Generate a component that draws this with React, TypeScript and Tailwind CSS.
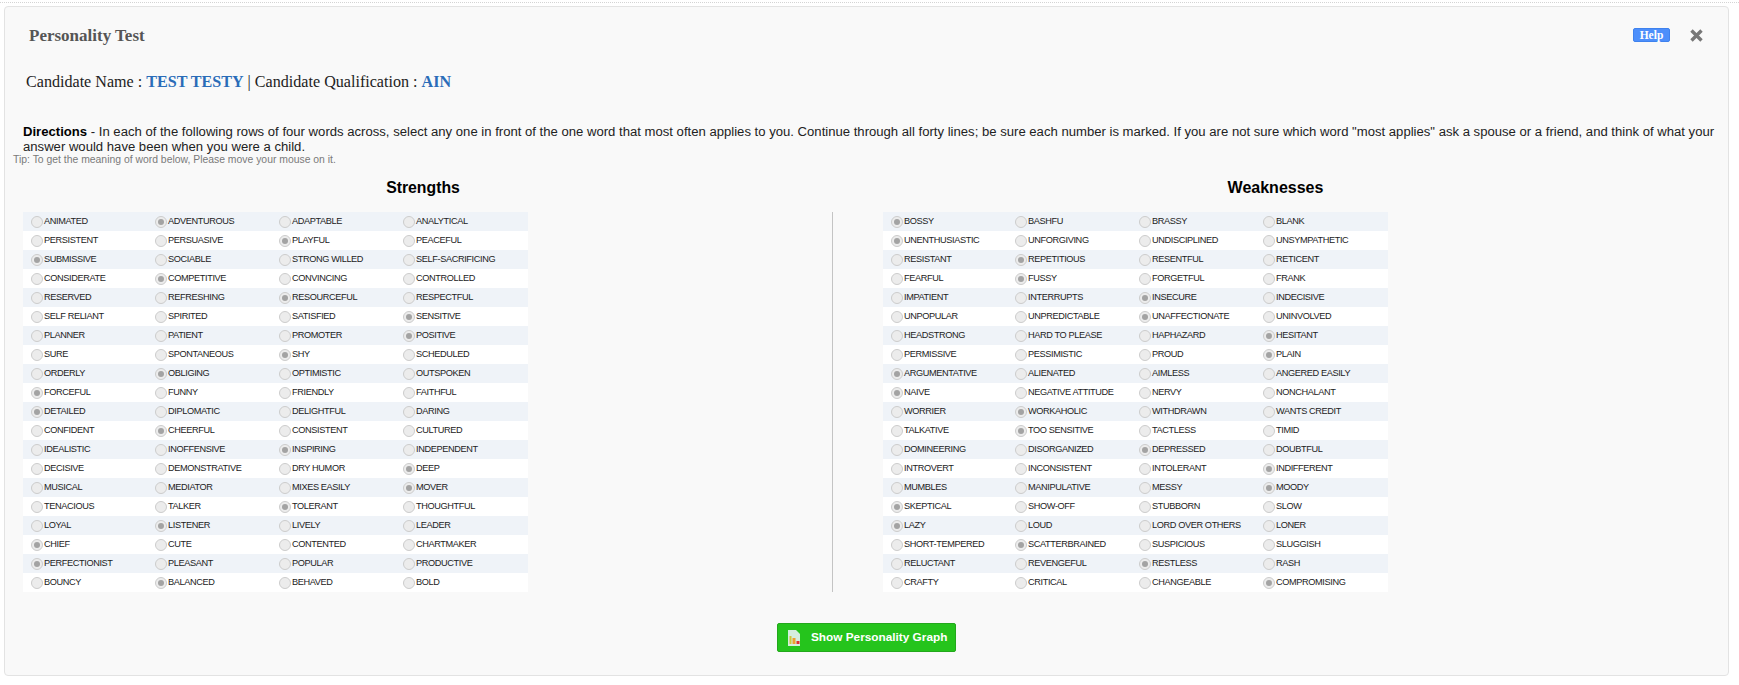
const strengths: [string[], number][] = [
  [["ANIMATED","ADVENTUROUS","ADAPTABLE","ANALYTICAL"],1],
  [["PERSISTENT","PERSUASIVE","PLAYFUL","PEACEFUL"],2],
  [["SUBMISSIVE","SOCIABLE","STRONG WILLED","SELF-SACRIFICING"],0],
  [["CONSIDERATE","COMPETITIVE","CONVINCING","CONTROLLED"],1],
  [["RESERVED","REFRESHING","RESOURCEFUL","RESPECTFUL"],2],
  [["SELF RELIANT","SPIRITED","SATISFIED","SENSITIVE"],3],
  [["PLANNER","PATIENT","PROMOTER","POSITIVE"],3],
  [["SURE","SPONTANEOUS","SHY","SCHEDULED"],2],
  [["ORDERLY","OBLIGING","OPTIMISTIC","OUTSPOKEN"],1],
  [["FORCEFUL","FUNNY","FRIENDLY","FAITHFUL"],0],
  [["DETAILED","DIPLOMATIC","DELIGHTFUL","DARING"],0],
  [["CONFIDENT","CHEERFUL","CONSISTENT","CULTURED"],1],
  [["IDEALISTIC","INOFFENSIVE","INSPIRING","INDEPENDENT"],2],
  [["DECISIVE","DEMONSTRATIVE","DRY HUMOR","DEEP"],3],
  [["MUSICAL","MEDIATOR","MIXES EASILY","MOVER"],3],
  [["TENACIOUS","TALKER","TOLERANT","THOUGHTFUL"],2],
  [["LOYAL","LISTENER","LIVELY","LEADER"],1],
  [["CHIEF","CUTE","CONTENTED","CHARTMAKER"],0],
  [["PERFECTIONIST","PLEASANT","POPULAR","PRODUCTIVE"],0],
  [["BOUNCY","BALANCED","BEHAVED","BOLD"],1],
];
const weaknesses: [string[], number][] = [
  [["BOSSY","BASHFU","BRASSY","BLANK"],0],
  [["UNENTHUSIASTIC","UNFORGIVING","UNDISCIPLINED","UNSYMPATHETIC"],0],
  [["RESISTANT","REPETITIOUS","RESENTFUL","RETICENT"],1],
  [["FEARFUL","FUSSY","FORGETFUL","FRANK"],1],
  [["IMPATIENT","INTERRUPTS","INSECURE","INDECISIVE"],2],
  [["UNPOPULAR","UNPREDICTABLE","UNAFFECTIONATE","UNINVOLVED"],2],
  [["HEADSTRONG","HARD TO PLEASE","HAPHAZARD","HESITANT"],3],
  [["PERMISSIVE","PESSIMISTIC","PROUD","PLAIN"],3],
  [["ARGUMENTATIVE","ALIENATED","AIMLESS","ANGERED EASILY"],0],
  [["NAIVE","NEGATIVE ATTITUDE","NERVY","NONCHALANT"],0],
  [["WORRIER","WORKAHOLIC","WITHDRAWN","WANTS CREDIT"],1],
  [["TALKATIVE","TOO SENSITIVE","TACTLESS","TIMID"],1],
  [["DOMINEERING","DISORGANIZED","DEPRESSED","DOUBTFUL"],2],
  [["INTROVERT","INCONSISTENT","INTOLERANT","INDIFFERENT"],3],
  [["MUMBLES","MANIPULATIVE","MESSY","MOODY"],3],
  [["SKEPTICAL","SHOW-OFF","STUBBORN","SLOW"],0],
  [["LAZY","LOUD","LORD OVER OTHERS","LONER"],0],
  [["SHORT-TEMPERED","SCATTERBRAINED","SUSPICIOUS","SLUGGISH"],1],
  [["RELUCTANT","REVENGEFUL","RESTLESS","RASH"],2],
  [["CRAFTY","CRITICAL","CHANGEABLE","COMPROMISING"],3],
];

function Radio({ on }: { on: boolean }) {
  return (
    <span className="w-[12px] h-[12px] shrink-0 rounded-full border border-[#cccccc] bg-[#ececec] flex items-center justify-center">
      {on && <span className="w-[6px] h-[6px] rounded-full bg-[#a3a3a3]" />}
    </span>
  );
}

function Table({ rows }: { rows: [string[], number][] }) {
  return (
    <div className="w-[505px]">
      {rows.map(([words, sel], i) => (
        <div key={i} className={`grid grid-cols-[124px_124px_124px_1fr] h-[19px] items-center pl-[8px] ${i % 2 === 0 ? "bg-[#eff3f8]" : "bg-white"}`}>
          {words.map((w, j) => (
            <div key={j} className="flex items-center text-[9.2px] tracking-[-0.38px] text-[#222] leading-none whitespace-nowrap">
              <Radio on={j === sel} />
              <span className="ml-[1px]">{w}</span>
            </div>
          ))}
        </div>
      ))}
    </div>
  );
}

export default function App() {
  return (
    <div className="h-[685px] bg-white overflow-hidden font-['Liberation_Sans',Arial,sans-serif] pt-[2px]">
      <div className="border-t border-dotted border-[#d4d4d4]" />
      <div className="mt-[3px] ml-[4px] w-[1725px] h-[670px] bg-[#f9f9f9] border border-[#e3e3e3] rounded-[4px] flex flex-col">
        <div className="flex items-start justify-between h-[66px] pt-[19px] pl-[24px] pr-[25px]">
          <h1 className="font-['Liberation_Serif',serif] font-bold text-[17px] leading-[20px] text-[#555]">Personality Test</h1>
          <div className="flex items-start gap-[20px] pt-[2px]">
            <span className="w-[37px] h-[14px] rounded-[2px] bg-[#4d8ffb] border border-[#3f82ee] text-white font-['Liberation_Serif',serif] font-bold text-[11.5px] leading-[12px] text-center">Help</span>
            <svg width="13" height="13" viewBox="0 0 13 13" className="block mt-px">
              <path d="M1.5 1.5 L11.5 11.5 M11.5 1.5 L1.5 11.5" stroke="#777" strokeWidth="3.4" />
            </svg>
          </div>
        </div>
        <p className="font-['Liberation_Serif',serif] text-[16.1px] leading-[18px] text-[#222] pl-[21px]">
          Candidate Name : <b className="text-[#2a6cb8]">TEST TESTY</b> | Candidate Qualification : <b className="text-[#2a6cb8]">AIN</b>
        </p>
        <p className="mt-[33px] pl-[18px] pr-[8px] text-[13.12px] leading-[15px] text-[#222]">
          <b className="text-black">Directions</b> - In each of the following rows of four words across, select any one in front of the one word that most often applies to you. Continue through all forty lines; be sure each number is marked. If you are not sure which word "most applies" ask a spouse or a friend, and think of what your answer would have been when you were a child.
        </p>
        <p className="pl-[8px] text-[10.4px] leading-[11px] text-[#7a7a7a]">Tip: To get the meaning of word below, Please move your mouse on it.</p>
        <div className="flex mt-[14px] pl-[18px]">
          <div className="w-[800px]">
            <h2 className="text-[15.8px] leading-[18px] font-bold text-black text-center h-[33px]">Strengths</h2>
            <Table rows={strengths} />
          </div>
          <div className="pt-[33px] ml-[9px]">
            <div className="w-px h-[380px] bg-[#c4c4c4]" />
          </div>
          <div className="w-[885px]">
            <h2 className="text-[16px] leading-[18px] font-bold text-black text-center h-[33px]">Weaknesses</h2>
            <div className="ml-[50px]">
              <Table rows={weaknesses} />
            </div>
          </div>
        </div>
        <div className="flex justify-center mt-[31px]">
          <button className="w-[179px] h-[29px] rounded-[2px] bg-[#25c41c] border border-[#23a81c] flex items-center pl-[10px] text-white font-bold text-[11.8px]">
            <svg width="12" height="16" viewBox="0 0 12 16" className="shrink-0">
              <path d="M0 0H8L12 4V16H0Z" fill="#d5eede" />
              <rect x="1.5" y="6" width="2" height="8" fill="#cfc83a" />
              <rect x="4.5" y="8" width="3" height="6" fill="#eda030" />
              <rect x="8.5" y="11" width="3" height="3" fill="#e03030" />
            </svg>
            <span className="ml-[11px]">Show Personality Graph</span>
          </button>
        </div>
      </div>
    </div>
  );
}
